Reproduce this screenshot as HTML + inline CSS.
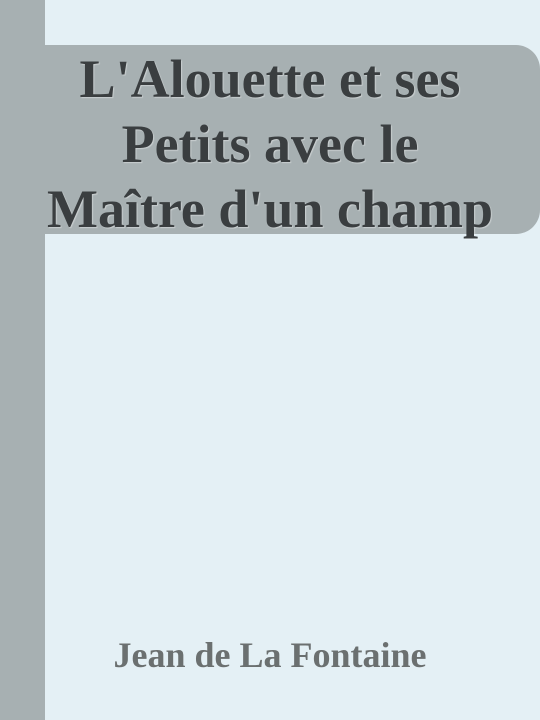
<!DOCTYPE html>
<html><head><meta charset="utf-8"><style>
html,body{margin:0;padding:0}
body{width:540px;height:720px;background:#e4f0f5;position:relative;overflow:hidden;font-family:"Liberation Serif",serif}
.bar{position:absolute;left:0;top:0;width:45px;height:720px;background:#a7b0b2}
.box{position:absolute;left:45px;top:45px;width:495px;height:189px;background:#a7b0b2;border-radius:0 24px 24px 0}
.t{position:absolute;left:0;width:540px;top:47px;text-align:center;font-weight:bold;font-size:54px;line-height:65px;color:#3a3e40;white-space:nowrap;text-shadow:1px 1px 1px rgba(255,255,255,.4)}
.a{position:absolute;left:0;width:540px;top:635px;text-align:center;font-weight:bold;font-size:36px;line-height:40px;color:#6b7070}
</style></head><body>
<div class="bar"></div>
<div class="box"></div>
<div class="t">L'Alouette et ses<br>Petits avec le<br>Maître d'un champ</div>
<div class="a">Jean de La Fontaine</div>
</body></html>
